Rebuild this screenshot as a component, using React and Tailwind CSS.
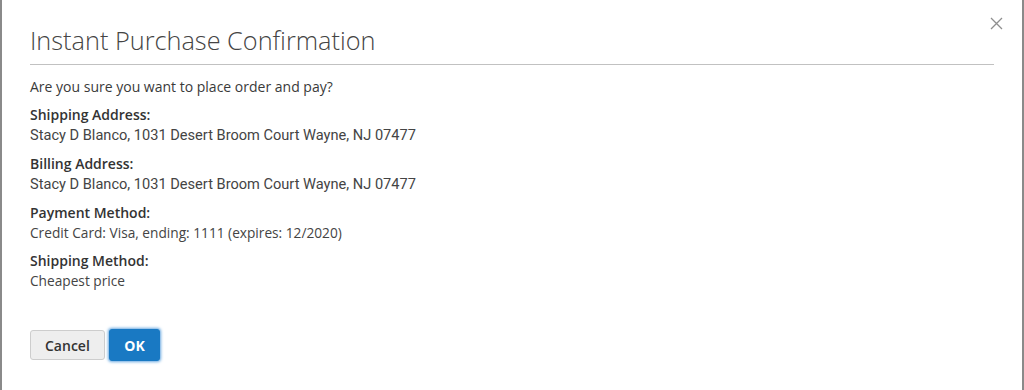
import React from "react";

const details = [
  { label: "Shipping Address:", value: "Stacy D Blanco, 1031 Desert Broom Court Wayne, NJ 07477", alt: true },
  { label: "Billing Address:", value: "Stacy D Blanco, 1031 Desert Broom Court Wayne, NJ 07477", alt: true },
  { label: "Payment Method:", value: "Credit Card: Visa, ending: 1111 (expires: 12/2020)" },
  { label: "Shipping Method:", value: "Cheapest price" },
];

const App = () => {
  return (
    <div className="w-[1024px] h-[390px] bg-white border-x-2 border-[#8a8a8a] overflow-hidden text-[#3a3a3a] font-['Open_Sans',sans-serif]">
      <div className="relative px-[28px]">
        <div className="pt-[25px] pb-[9px] border-b border-[#c1c1c1]">
          <h1 className="text-[25.3px] font-light leading-[1.2] text-[#444]">
            Instant Purchase Confirmation
          </h1>
        </div>
        <button className="absolute right-[19px] top-[17px] w-[13px] h-[13px] text-[#8f8f8f]">
          <svg viewBox="0 0 13 13" width="13" height="13" fill="none" stroke="currentColor" strokeWidth="1.3">
            <path d="M1 1 L12 12 M12 1 L1 12" />
          </svg>
        </button>
        <div className="pt-[12px] text-[14px] leading-[20px]">
          <p className="mb-[8px]">Are you sure you want to place order and pay?</p>
          {details.map((d) => (
            <div key={d.label} className="mb-[8.6px]">
              <div className="font-semibold text-[#333]">{d.label}</div>
              <div className={d.alt ? "font-['Roboto',sans-serif] text-[14.6px] text-[#444]" : "text-[13.7px] text-[#444]"}>
                {d.value}
              </div>
            </div>
          ))}
        </div>
        <div className="flex items-center gap-[4px] mt-[38px]">
          <button className="h-[30px] px-[14px] bg-[#eee] border border-[#cdcdcd] rounded-[3px] text-[14px] font-semibold text-[#333]">
            Cancel
          </button>
          <button className="h-[32px] px-[14.5px] bg-[#1979c3] border border-[#1979c3] rounded-[3px] text-[14px] font-bold text-white shadow-[0_0_3px_1px_#68a8e0]">
            OK
          </button>
        </div>
      </div>
    </div>
  );
};

export default App;
